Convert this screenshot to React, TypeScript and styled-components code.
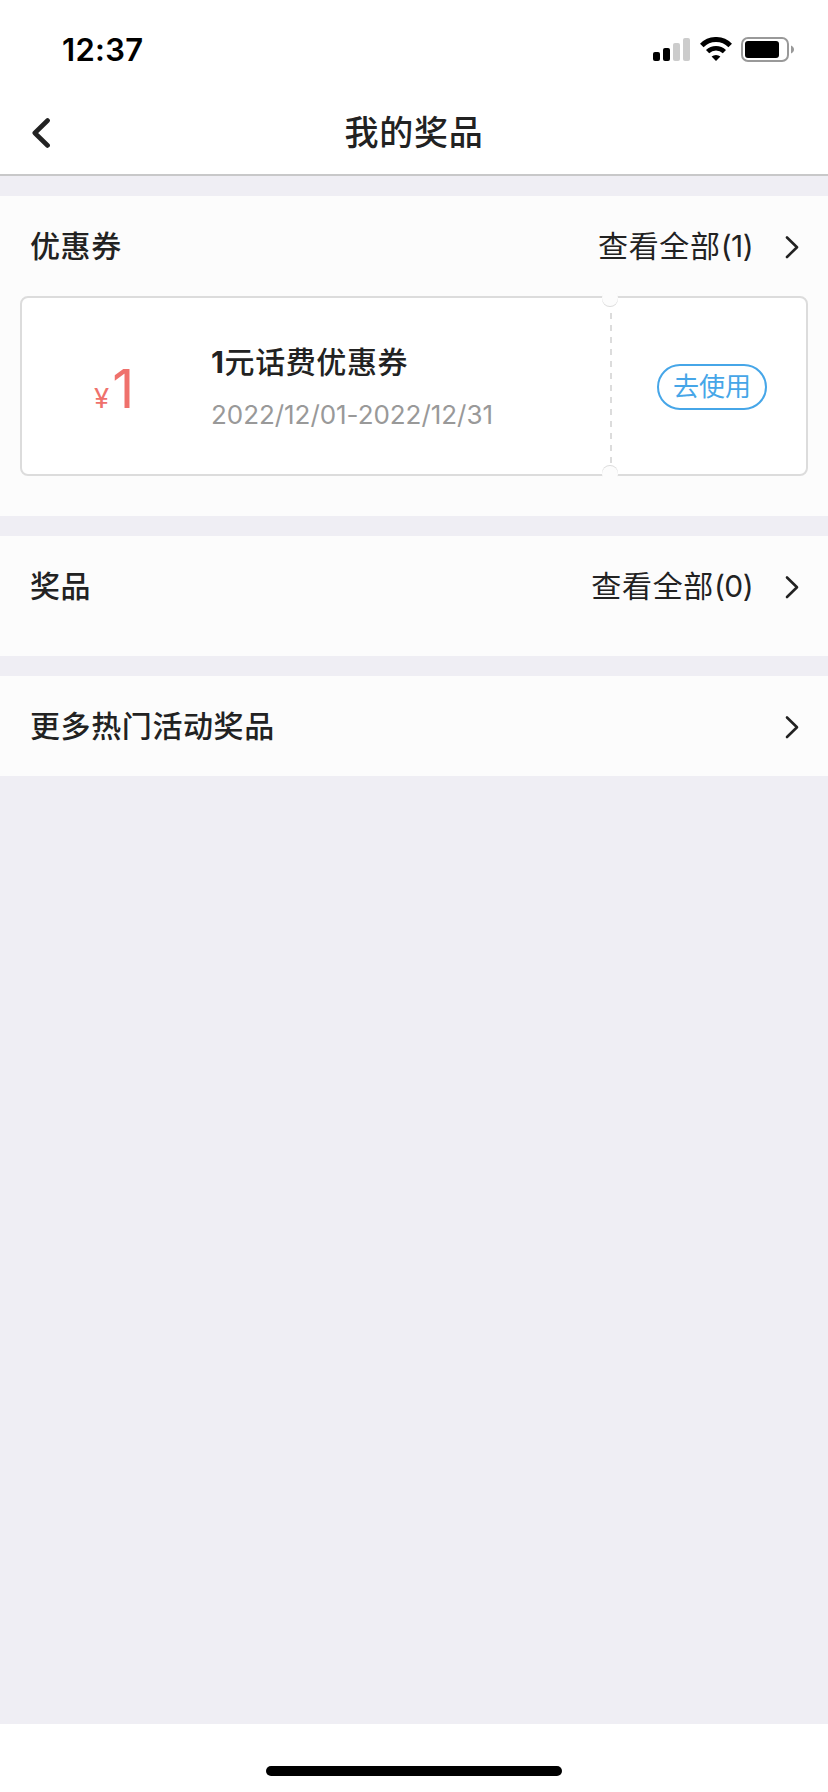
import React from 'react';
import styled, { createGlobalStyle } from 'styled-components';

const GlobalStyle = createGlobalStyle`
  * { box-sizing: border-box; }
  body {
    margin: 0;
    background: #efeff4;
    color: #222;
    font-family: Inter, "Noto Sans CJK SC", sans-serif;
  }
`;

const Screen = styled.div`
  display: flex;
  flex-direction: column;
  width: 828px;
  height: 1792px;
  background: #efeef4;
`;

const Header = styled.header`
  height: 176px;
  background: #fff;
  border-bottom: 2px solid #c8c8c9;
`;

const StatusBar = styled.div`
  display: flex;
  justify-content: space-between;
  align-items: center;
  height: 88px;
  padding: 12px 33px 0 62px;
`;

const Time = styled.span`
  font-size: 31px;
  font-weight: 600;
  line-height: 36px;
  letter-spacing: 0.3px;
  color: #000;
`;

const StatusIcons = styled.div`
  display: flex;
  align-items: center;
  height: 26px;
`;

const NavBar = styled.nav`
  display: grid;
  grid-template-columns: 100px 1fr 100px;
  align-items: center;
  height: 86px;
  padding-top: 3px;
`;

const BackButton = styled.button`
  display: flex;
  padding: 0 0 0 32px;
  border: 0;
  background: none;
`;

const Title = styled.h1`
  margin: 0;
  text-align: center;
  font-size: 34px;
  font-weight: 500;
  line-height: 48px;
  letter-spacing: 0.7px;
`;

const Content = styled.main`
  flex: 1;
  display: flex;
  flex-direction: column;
  gap: 20px;
  padding-top: 20px;
`;

const Section = styled.section<{ $height: number }>`
  height: ${(p) => p.$height}px;
  background: #fcfcfc;
`;

const SectionHeader = styled.div`
  display: flex;
  align-items: center;
  height: 100px;
  padding: 0 29px 0 30px;
`;

const SectionTitle = styled.h2`
  flex: 1;
  margin: 0;
  font-size: 30px;
  font-weight: 500;
  line-height: 44px;
  letter-spacing: 0.6px;
`;

const ViewAll = styled.span`
  margin-right: 32px;
  font-size: 30px;
  line-height: 44px;
  letter-spacing: 0.67px;
`;

const Count = styled.span`
  letter-spacing: -0.6px;
`;

const Coupon = styled.article`
  position: relative;
  display: flex;
  width: 788px;
  height: 180px;
  margin-left: 20px;
  border: 2px solid #dcdcdc;
  border-radius: 8px;
  background: #fff;
`;

const Amount = styled.div`
  width: 189px;
  padding: 56px 0 0 72px;
  color: #ef716c;
  line-height: 70px;
  white-space: nowrap;
`;

const Currency = styled.span`
  margin-right: 3px;
  font-size: 27.5px;
`;

const Value = styled.span`
  font-size: 54px;
`;

const CouponInfo = styled.div`
  flex: 1;
  padding-top: 42px;
`;

const CouponName = styled.h3`
  margin: 0;
  font-size: 30px;
  font-weight: 500;
  line-height: 44px;
  letter-spacing: 0.6px;
`;

const Digit = styled.span`
  font-weight: 700;
`;

const Validity = styled.p`
  margin: 13px 0 0;
  font-size: 26px;
  line-height: 36px;
  letter-spacing: -0.05px;
  color: #999;
`;

const CouponAction = styled.div`
  width: 194px;
  padding: 2px 0 0 45px;
  display: flex;
  align-items: center;
`;

const UseButton = styled.button`
  width: 110px;
  height: 46px;
  padding: 0;
  border: 2px solid #46a6e8;
  border-radius: 23px;
  background: #fff;
  color: #46a6e8;
  font: 400 26px/40px Inter, "Noto Sans CJK SC", sans-serif;
`;

const Perforation = styled.div`
  width: 2px;
  height: 150px;
  margin-top: 15px;
  background: repeating-linear-gradient(to bottom, #dcdcdc 0 6px, transparent 6px 12px);
`;

const Notch = styled.i<{ $bottom?: boolean }>`
  position: absolute;
  left: 580px;
  ${(p) => (p.$bottom ? 'bottom: -8px;' : 'top: -8px;')}
  width: 16px;
  height: 16px;
  border-radius: 50%;
  background: #fcfcfc;
  box-shadow: 0 ${(p) => (p.$bottom ? '-1px' : '1px')} 0 0 #dcdcdc;
`;

const HomeArea = styled.footer`
  display: flex;
  justify-content: center;
  height: 68px;
  padding-top: 42px;
  background: #fff;
`;

const HomeIndicator = styled.div`
  width: 296px;
  height: 10px;
  border-radius: 5px;
  background: #000;
`;

const SpacedIcon = styled.svg`
  margin-left: 8px;
`;

const ChevronIcon = styled.svg`
  margin-top: 2px;
`;

const Signal = () => (
  <svg width="38" height="26" viewBox="0 0 38 26">
    <rect x="0" y="15" width="7" height="9" rx="2" />
    <rect x="10" y="11" width="7" height="13" rx="2" />
    <rect x="20" y="6" width="7" height="18" rx="2" fill="#ccc" />
    <rect x="30" y="1" width="7" height="23" rx="2" fill="#ccc" />
  </svg>
);

const Wifi = () => (
  <SpacedIcon width="34" height="26" viewBox="0 0 34 26">
    <path d="M2.800 8.400a20 20 0 0 1 28.400 0" fill="none" stroke="#000" strokeWidth="5" />
    <path d="M8.600 14.700a12 12 0 0 1 16.800 0" fill="none" stroke="#000" strokeWidth="4.6" />
    <path d="M17 24l-4.400-4.400a6.500 6.500 0 0 1 8.800 0z" />
  </SpacedIcon>
);

const Battery = () => (
  <SpacedIcon width="54" height="26" viewBox="0 0 54 26">
    <rect x="1" y="1" width="46" height="23" rx="6" fill="none" stroke="#999" strokeWidth="2" />
    <rect x="4" y="4" width="34" height="17" rx="3" />
    <path d="M50 8.500c4 1.500 4 6.500 0 8z" fill="#999" />
  </SpacedIcon>
);

const Chevron = () => (
  <ChevronIcon width="14" height="24" viewBox="0 0 14 24" fill="none" stroke="#222" strokeWidth="2.6" strokeLinecap="round" strokeLinejoin="round">
    <path d="M2 2.500l10 9.800L2 22" />
  </ChevronIcon>
);

const BackIcon = () => (
  <svg width="20" height="30" viewBox="0 0 20 30" fill="none" stroke="#222" strokeWidth="4.6" strokeLinecap="round" strokeLinejoin="round">
    <path d="M15.600 2.500L2.800 15l12.800 12.500" />
  </svg>
);

interface SectionProps {
  title: string;
  height: number;
  count?: number;
  children?: React.ReactNode;
}

const PrizeSection = ({ title, height, count, children }: SectionProps) => (
  <Section $height={height}>
    <SectionHeader>
      <SectionTitle>{title}</SectionTitle>
      {count !== undefined && (
        <ViewAll>
          查看全部<Count>{`(${count})`}</Count>
        </ViewAll>
      )}
      <Chevron />
    </SectionHeader>
    {children}
  </Section>
);

export default function App() {
  return (
    <Screen lang="zh-CN">
      <GlobalStyle />
      <Header>
        <StatusBar>
          <Time>12:37</Time>
          <StatusIcons>
            <Signal />
            <Wifi />
            <Battery />
          </StatusIcons>
        </StatusBar>
        <NavBar>
          <BackButton aria-label="返回">
            <BackIcon />
          </BackButton>
          <Title>我的奖品</Title>
        </NavBar>
      </Header>
      <Content>
        <PrizeSection title="优惠券" height={320} count={1}>
          <Coupon>
            <Amount>
              <Currency>¥</Currency>
              <Value>1</Value>
            </Amount>
            <CouponInfo>
              <CouponName>
                <Digit>1</Digit>元话费优惠券
              </CouponName>
              <Validity>2022/12/01-2022/12/31</Validity>
            </CouponInfo>
            <Perforation />
            <CouponAction>
              <UseButton>去使用</UseButton>
            </CouponAction>
            <Notch />
            <Notch $bottom />
          </Coupon>
        </PrizeSection>
        <PrizeSection title="奖品" height={120} count={0} />
        <PrizeSection title="更多热门活动奖品" height={100} />
      </Content>
      <HomeArea>
        <HomeIndicator />
      </HomeArea>
    </Screen>
  );
}
